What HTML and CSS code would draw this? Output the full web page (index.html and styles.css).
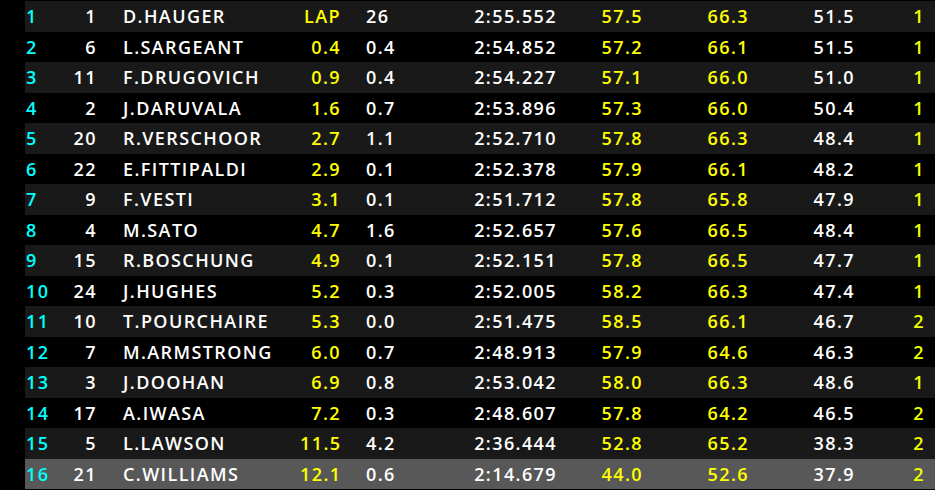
FILE: index.html
```html
<!DOCTYPE html>
<html>
<head>
<meta charset="utf-8">
<link rel="stylesheet" href="styles.css">
</head>
<body>
<div class="board">
  <div class="row odd"><span class="pos">1</span><span class="num">1</span><span class="name">D.HAUGER</span><span class="gap">LAP</span><span class="int">26</span><span class="time">2:55.552</span><span class="s1">57.5</span><span class="s2">66.3</span><span class="s3">51.5</span><span class="pit">1</span></div>
  <div class="row"><span class="pos">2</span><span class="num">6</span><span class="name">L.SARGEANT</span><span class="gap">0.4</span><span class="int">0.4</span><span class="time">2:54.852</span><span class="s1">57.2</span><span class="s2">66.1</span><span class="s3">51.5</span><span class="pit">1</span></div>
  <div class="row odd"><span class="pos">3</span><span class="num">11</span><span class="name">F.DRUGOVICH</span><span class="gap">0.9</span><span class="int">0.4</span><span class="time">2:54.227</span><span class="s1">57.1</span><span class="s2">66.0</span><span class="s3">51.0</span><span class="pit">1</span></div>
  <div class="row"><span class="pos">4</span><span class="num">2</span><span class="name">J.DARUVALA</span><span class="gap">1.6</span><span class="int">0.7</span><span class="time">2:53.896</span><span class="s1">57.3</span><span class="s2">66.0</span><span class="s3">50.4</span><span class="pit">1</span></div>
  <div class="row odd"><span class="pos">5</span><span class="num">20</span><span class="name">R.VERSCHOOR</span><span class="gap">2.7</span><span class="int">1.1</span><span class="time">2:52.710</span><span class="s1">57.8</span><span class="s2">66.3</span><span class="s3">48.4</span><span class="pit">1</span></div>
  <div class="row"><span class="pos">6</span><span class="num">22</span><span class="name">E.FITTIPALDI</span><span class="gap">2.9</span><span class="int">0.1</span><span class="time">2:52.378</span><span class="s1">57.9</span><span class="s2">66.1</span><span class="s3">48.2</span><span class="pit">1</span></div>
  <div class="row odd"><span class="pos">7</span><span class="num">9</span><span class="name">F.VESTI</span><span class="gap">3.1</span><span class="int">0.1</span><span class="time">2:51.712</span><span class="s1">57.8</span><span class="s2">65.8</span><span class="s3">47.9</span><span class="pit">1</span></div>
  <div class="row"><span class="pos">8</span><span class="num">4</span><span class="name">M.SATO</span><span class="gap">4.7</span><span class="int">1.6</span><span class="time">2:52.657</span><span class="s1">57.6</span><span class="s2">66.5</span><span class="s3">48.4</span><span class="pit">1</span></div>
  <div class="row odd"><span class="pos">9</span><span class="num">15</span><span class="name">R.BOSCHUNG</span><span class="gap">4.9</span><span class="int">0.1</span><span class="time">2:52.151</span><span class="s1">57.8</span><span class="s2">66.5</span><span class="s3">47.7</span><span class="pit">1</span></div>
  <div class="row"><span class="pos">10</span><span class="num">24</span><span class="name">J.HUGHES</span><span class="gap">5.2</span><span class="int">0.3</span><span class="time">2:52.005</span><span class="s1">58.2</span><span class="s2">66.3</span><span class="s3">47.4</span><span class="pit">1</span></div>
  <div class="row odd"><span class="pos">11</span><span class="num">10</span><span class="name">T.POURCHAIRE</span><span class="gap">5.3</span><span class="int">0.0</span><span class="time">2:51.475</span><span class="s1">58.5</span><span class="s2">66.1</span><span class="s3">46.7</span><span class="pit">2</span></div>
  <div class="row"><span class="pos">12</span><span class="num">7</span><span class="name">M.ARMSTRONG</span><span class="gap">6.0</span><span class="int">0.7</span><span class="time">2:48.913</span><span class="s1">57.9</span><span class="s2">64.6</span><span class="s3">46.3</span><span class="pit">2</span></div>
  <div class="row odd"><span class="pos">13</span><span class="num">3</span><span class="name">J.DOOHAN</span><span class="gap">6.9</span><span class="int">0.8</span><span class="time">2:53.042</span><span class="s1">58.0</span><span class="s2">66.3</span><span class="s3">48.6</span><span class="pit">1</span></div>
  <div class="row"><span class="pos">14</span><span class="num">17</span><span class="name">A.IWASA</span><span class="gap">7.2</span><span class="int">0.3</span><span class="time">2:48.607</span><span class="s1">57.8</span><span class="s2">64.2</span><span class="s3">46.5</span><span class="pit">2</span></div>
  <div class="row odd"><span class="pos">15</span><span class="num">5</span><span class="name">L.LAWSON</span><span class="gap">11.5</span><span class="int">4.2</span><span class="time">2:36.444</span><span class="s1">52.8</span><span class="s2">65.2</span><span class="s3">38.3</span><span class="pit">2</span></div>
  <div class="row sel"><span class="pos">16</span><span class="num">21</span><span class="name">C.WILLIAMS</span><span class="gap">12.1</span><span class="int">0.6</span><span class="time">2:14.679</span><span class="s1">44.0</span><span class="s2">52.6</span><span class="s3">37.9</span><span class="pit">2</span></div>
</div>
</body>
</html>
```
FILE: styles.css
```css
html, body {
  margin: 0;
  padding: 0;
  background: #000;
}
body {
  width: 935px;
  height: 490px;
  overflow: hidden;
  font-family: "Open Sans", "Noto Sans", sans-serif;
  font-weight: 600;
  font-size: 18px;
  letter-spacing: 1.4px;
  color: #fff;
}
.board {
  padding-top: 1px;
  padding-left: 25px;
}
.row {
  display: grid;
  grid-template-columns: 37px 35px 203px 41px 79px 137px 86px 106px 106px 70px 1fr;
  height: 30.5px;
  align-items: center;
  line-height: 30px;
  white-space: nowrap;
}
.row.odd { background: #191919; }
.row.sel { background: #585858; }
.pos { color: #00ffff; padding-left: 1px; }
.num { text-align: right; }
.name { padding-left: 26px; }
.gap { color: #ffff00; text-align: right; }
.int { padding-left: 25px; }
.time { text-align: right; }
.s1, .s2 { color: #ffff00; text-align: right; }
.s3 { text-align: right; }
.pit { color: #eeff00; text-align: right; }
```
